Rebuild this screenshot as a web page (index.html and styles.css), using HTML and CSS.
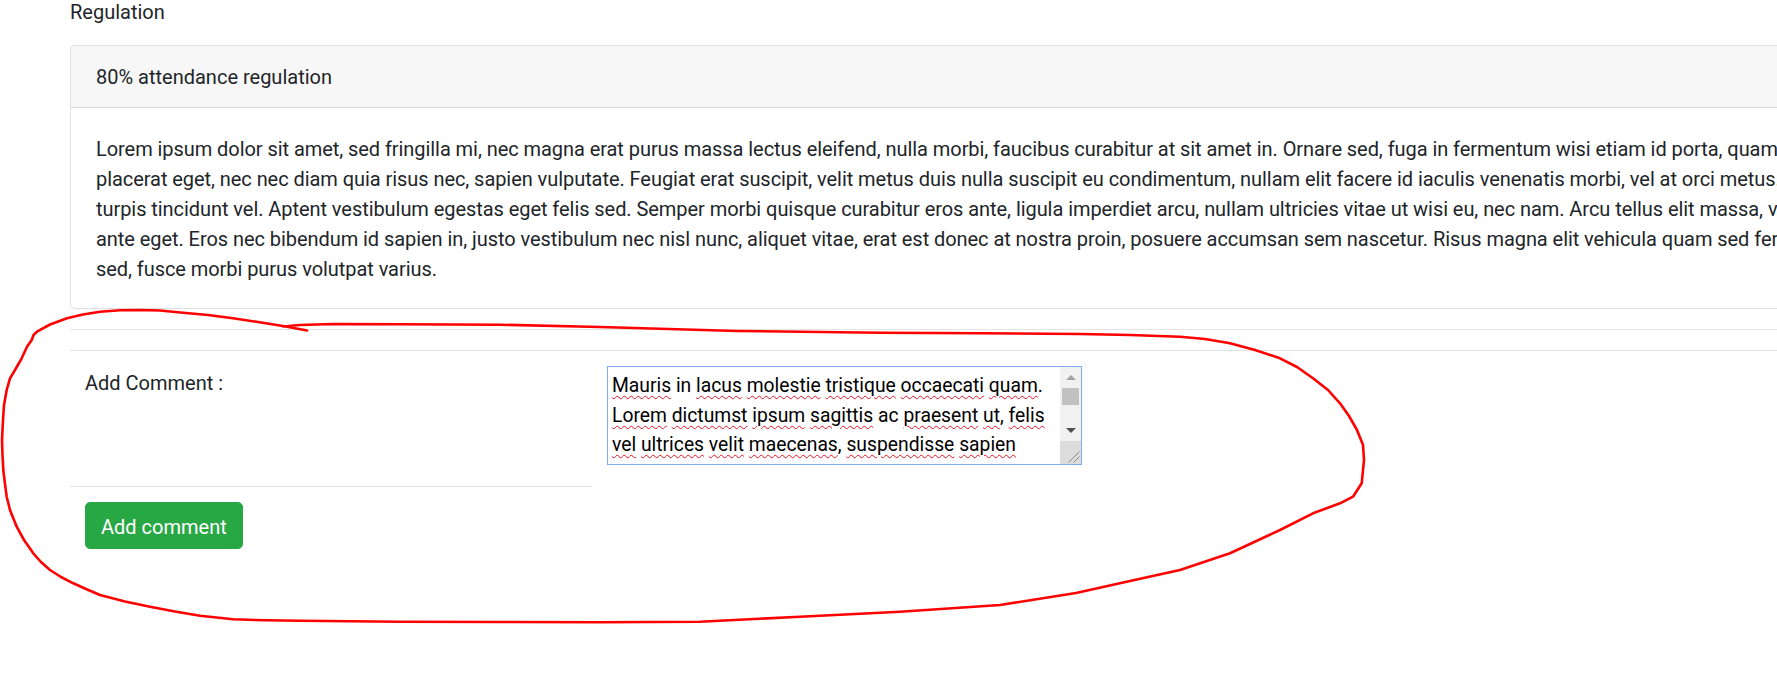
FILE: index.html
```html
<!DOCTYPE html>
<html lang="en">
<head>
<meta charset="utf-8">
<title>Regulation</title>
<link rel="stylesheet" href="styles.css">
</head>
<body>
<div class="page">
  <div class="section-title">Regulation</div>
  <div class="card">
    <div class="card-header">80% attendance regulation</div>
    <div class="card-body">
      <p class="card-text">Lorem ipsum dolor sit amet, sed fringilla mi, nec magna erat purus massa lectus eleifend, nulla morbi, faucibus curabitur at sit amet in. Ornare sed, fuga in fermentum wisi etiam id porta, quam mauris elit, scelerisque lacus aenean<br>placerat eget, nec nec diam quia risus nec, sapien vulputate. Feugiat erat suscipit, velit metus duis nulla suscipit eu condimentum, nullam elit facere id iaculis venenatis morbi, vel at orci metus. Nunc pellentesque, mauris erat<br>turpis tincidunt vel. Aptent vestibulum egestas eget felis sed. Semper morbi quisque curabitur eros ante, ligula imperdiet arcu, nullam ultricies vitae ut wisi eu, nec nam. Arcu tellus elit massa, vitae lectus at<br>ante eget. Eros nec bibendum id sapien in, justo vestibulum nec nisl nunc, aliquet vitae, erat est donec at nostra proin, posuere accumsan sem nascetur. Risus magna elit vehicula quam sed fermentum, nulla<br>sed, fusce morbi purus volutpat varius.</p>
    </div>
  </div>
  <hr class="divider">
  <table class="comment-table">
    <tr>
      <td class="label-cell">Add Comment :</td>
      <td class="input-cell">
        <div class="textarea" role="textbox" aria-multiline="true">
          <div class="textarea-text">
            <div><span class="sp">Mauris</span> in <span class="sp">lacus</span> <span class="sp">molestie</span> <span class="sp">tristique</span> <span class="sp">occaecati</span> <span class="sp">quam</span>.</div>
            <div><span class="sp">Lorem</span> <span class="sp">dictumst</span> <span class="sp">ipsum</span> <span class="sp">sagittis</span> ac <span class="sp">praesent</span> <span class="sp">ut</span>, <span class="sp">felis</span></div>
            <div><span class="sp">vel</span> <span class="sp">ultrices</span> <span class="sp">velit</span> <span class="sp">maecenas</span>, <span class="sp">suspendisse</span> <span class="sp">sapien</span></div>
          </div>
          <div class="scrollbar">
            <div class="sb-btn"><span class="tri-up"></span></div>
            <div class="sb-track"><div class="sb-thumb"></div></div>
            <div class="sb-btn"><span class="tri-down"></span></div>
            <div class="sb-corner">
              <svg width="21" height="23" viewBox="0 0 21 23"><path d="M8.5 21.5 L19.5 10.5 M13.5 21.5 L19.5 15.5" stroke="#8a8a8a" stroke-width="1" fill="none"/></svg>
            </div>
          </div>
        </div>
      </td>
    </tr>
    <tr>
      <td class="button-cell"><button class="btn-success" type="button">Add comment</button></td>
    </tr>
  </table>
</div>
<svg class="annotation" width="1777" height="675" viewBox="0 0 1777 675">
  <path fill="none" stroke="#ff0000" stroke-width="2.6" stroke-linejoin="round" stroke-linecap="round"
    d="M307 330.5 L283 326 L258 322 L233 318.3 L208 315 L183 312.7 L160 310.5 L140 310 L120 310.3 L100 311.7 L83 314.5 L67 318.3 L50 324.5 L37 331.7 L33.5 335 L31.7 340 L27 346.7 L21.7 358.3 L15 370 L10 378.3 L6.7 390 L4 405 L3 420 L2 440 L2.5 455 L3.3 470 L5 484 L6.7 496.7 L10 510 L16.7 526.7 L24 540 L33.3 553.3 L41 562 L50 570 L61 577 L73.3 583.3 L86 589 L100 595 L125 601.5 L150 606.7 L175 611.5 L200 615.7 L233 619.3 L266 620.3 L300 620.7 L400 621.7 L500 622 L600 622.3 L700 621.7 L800 616.7 L900 611.7 L1000 605 L1076 593 L1130 581 L1180 570 L1230 553.3 L1280 530 L1313 513.3 L1340 503.3 L1353 496.7 L1361.7 483.3 L1364 460 L1363 445 L1357 430 L1349 416 L1340 403.3 L1328 390 L1313 378.3 L1297 367 L1280 358.3 L1255 350 L1230 343.3 L1205 339 L1180 336.7 L1130 335 L1080 334 L980 333.3 L880 332.7 L737 331 L600 327 L500 324.7 L400 324.3 L333 324 L300 325 L283 326.5"/>
</svg>
</body>
</html>
```
FILE: styles.css
```css
html {
  overflow: hidden;
  background: #fff;
}
body {
  margin: 0;
  min-height: 675px;
  font-family: Roboto, "Liberation Sans", sans-serif;
  font-size: 20px;
  line-height: 30px;
  color: #212529;
}
.page {
  width: 2600px;
  padding-left: 70px;
}
.section-title {
  margin: -3px 0 18px;
}
.card {
  border: 1px solid rgba(0, 0, 0, 0.125);
  border-radius: 5px;
  background: #fff;
}
.card-header {
  background: rgba(0, 0, 0, 0.03);
  border-bottom: 1px solid rgba(0, 0, 0, 0.125);
  border-radius: 4px 4px 0 0;
  padding: 16px 25px 15px;
}
.card-body {
  padding: 26px 25px 24px;
}
.card-text {
  margin: 0;
  white-space: nowrap;
  letter-spacing: -0.06px;
}
.divider {
  margin: 20px 0;
  border: 0;
  border-top: 1px solid rgba(0, 0, 0, 0.1);
  height: 0;
}
.comment-table {
  border-collapse: collapse;
  width: 100%;
}
.comment-table td {
  padding: 15px;
  border-top: 1px solid #dee2e6;
  vertical-align: top;
}
.comment-table td.label-cell {
  width: 492px;
  padding-top: 17px;
}
.textarea {
  display: flex;
  box-sizing: border-box;
  width: 475px;
  height: 99px;
  border: 1px solid #7fabec;
  margin-bottom: 6px;
  background: #fff;
}
.textarea-text {
  flex: 1;
  padding: 4px 4px 0;
  color: #000;
  font-size: 19.3px;
  line-height: 29.5px;
  white-space: nowrap;
  overflow: hidden;
}
.sp {
  text-decoration-line: underline;
  text-decoration-style: wavy;
  text-decoration-color: #e81123;
  text-decoration-thickness: 1px;
  text-underline-offset: 3px;
}
.scrollbar {
  width: 21px;
  display: flex;
  flex-direction: column;
  background: #f1f1f1;
}
.sb-btn {
  height: 21px;
  display: flex;
  align-items: center;
  justify-content: center;
}
.tri-up {
  width: 0;
  height: 0;
  border-left: 5px solid transparent;
  border-right: 5px solid transparent;
  border-bottom: 5px solid #a3a3a3;
}
.tri-down {
  width: 0;
  height: 0;
  border-left: 5px solid transparent;
  border-right: 5px solid transparent;
  border-top: 5px solid #505050;
}
.sb-track {
  flex: 1;
  display: flex;
  flex-direction: column;
}
.sb-thumb {
  height: 17px;
  margin: 0 2px;
  background: #c1c1c1;
}
.sb-corner {
  height: 23px;
  background: #dcdcdc;
}
.sb-corner svg {
  display: block;
}
.btn-success {
  font: inherit;
  line-height: 30px;
  color: #fff;
  background: #28a745;
  border: 1px solid #28a745;
  border-radius: 5px;
  padding: 9px 15px 6px;
  cursor: pointer;
}
.annotation {
  position: absolute;
  left: 0;
  top: 0;
  pointer-events: none;
}
```
